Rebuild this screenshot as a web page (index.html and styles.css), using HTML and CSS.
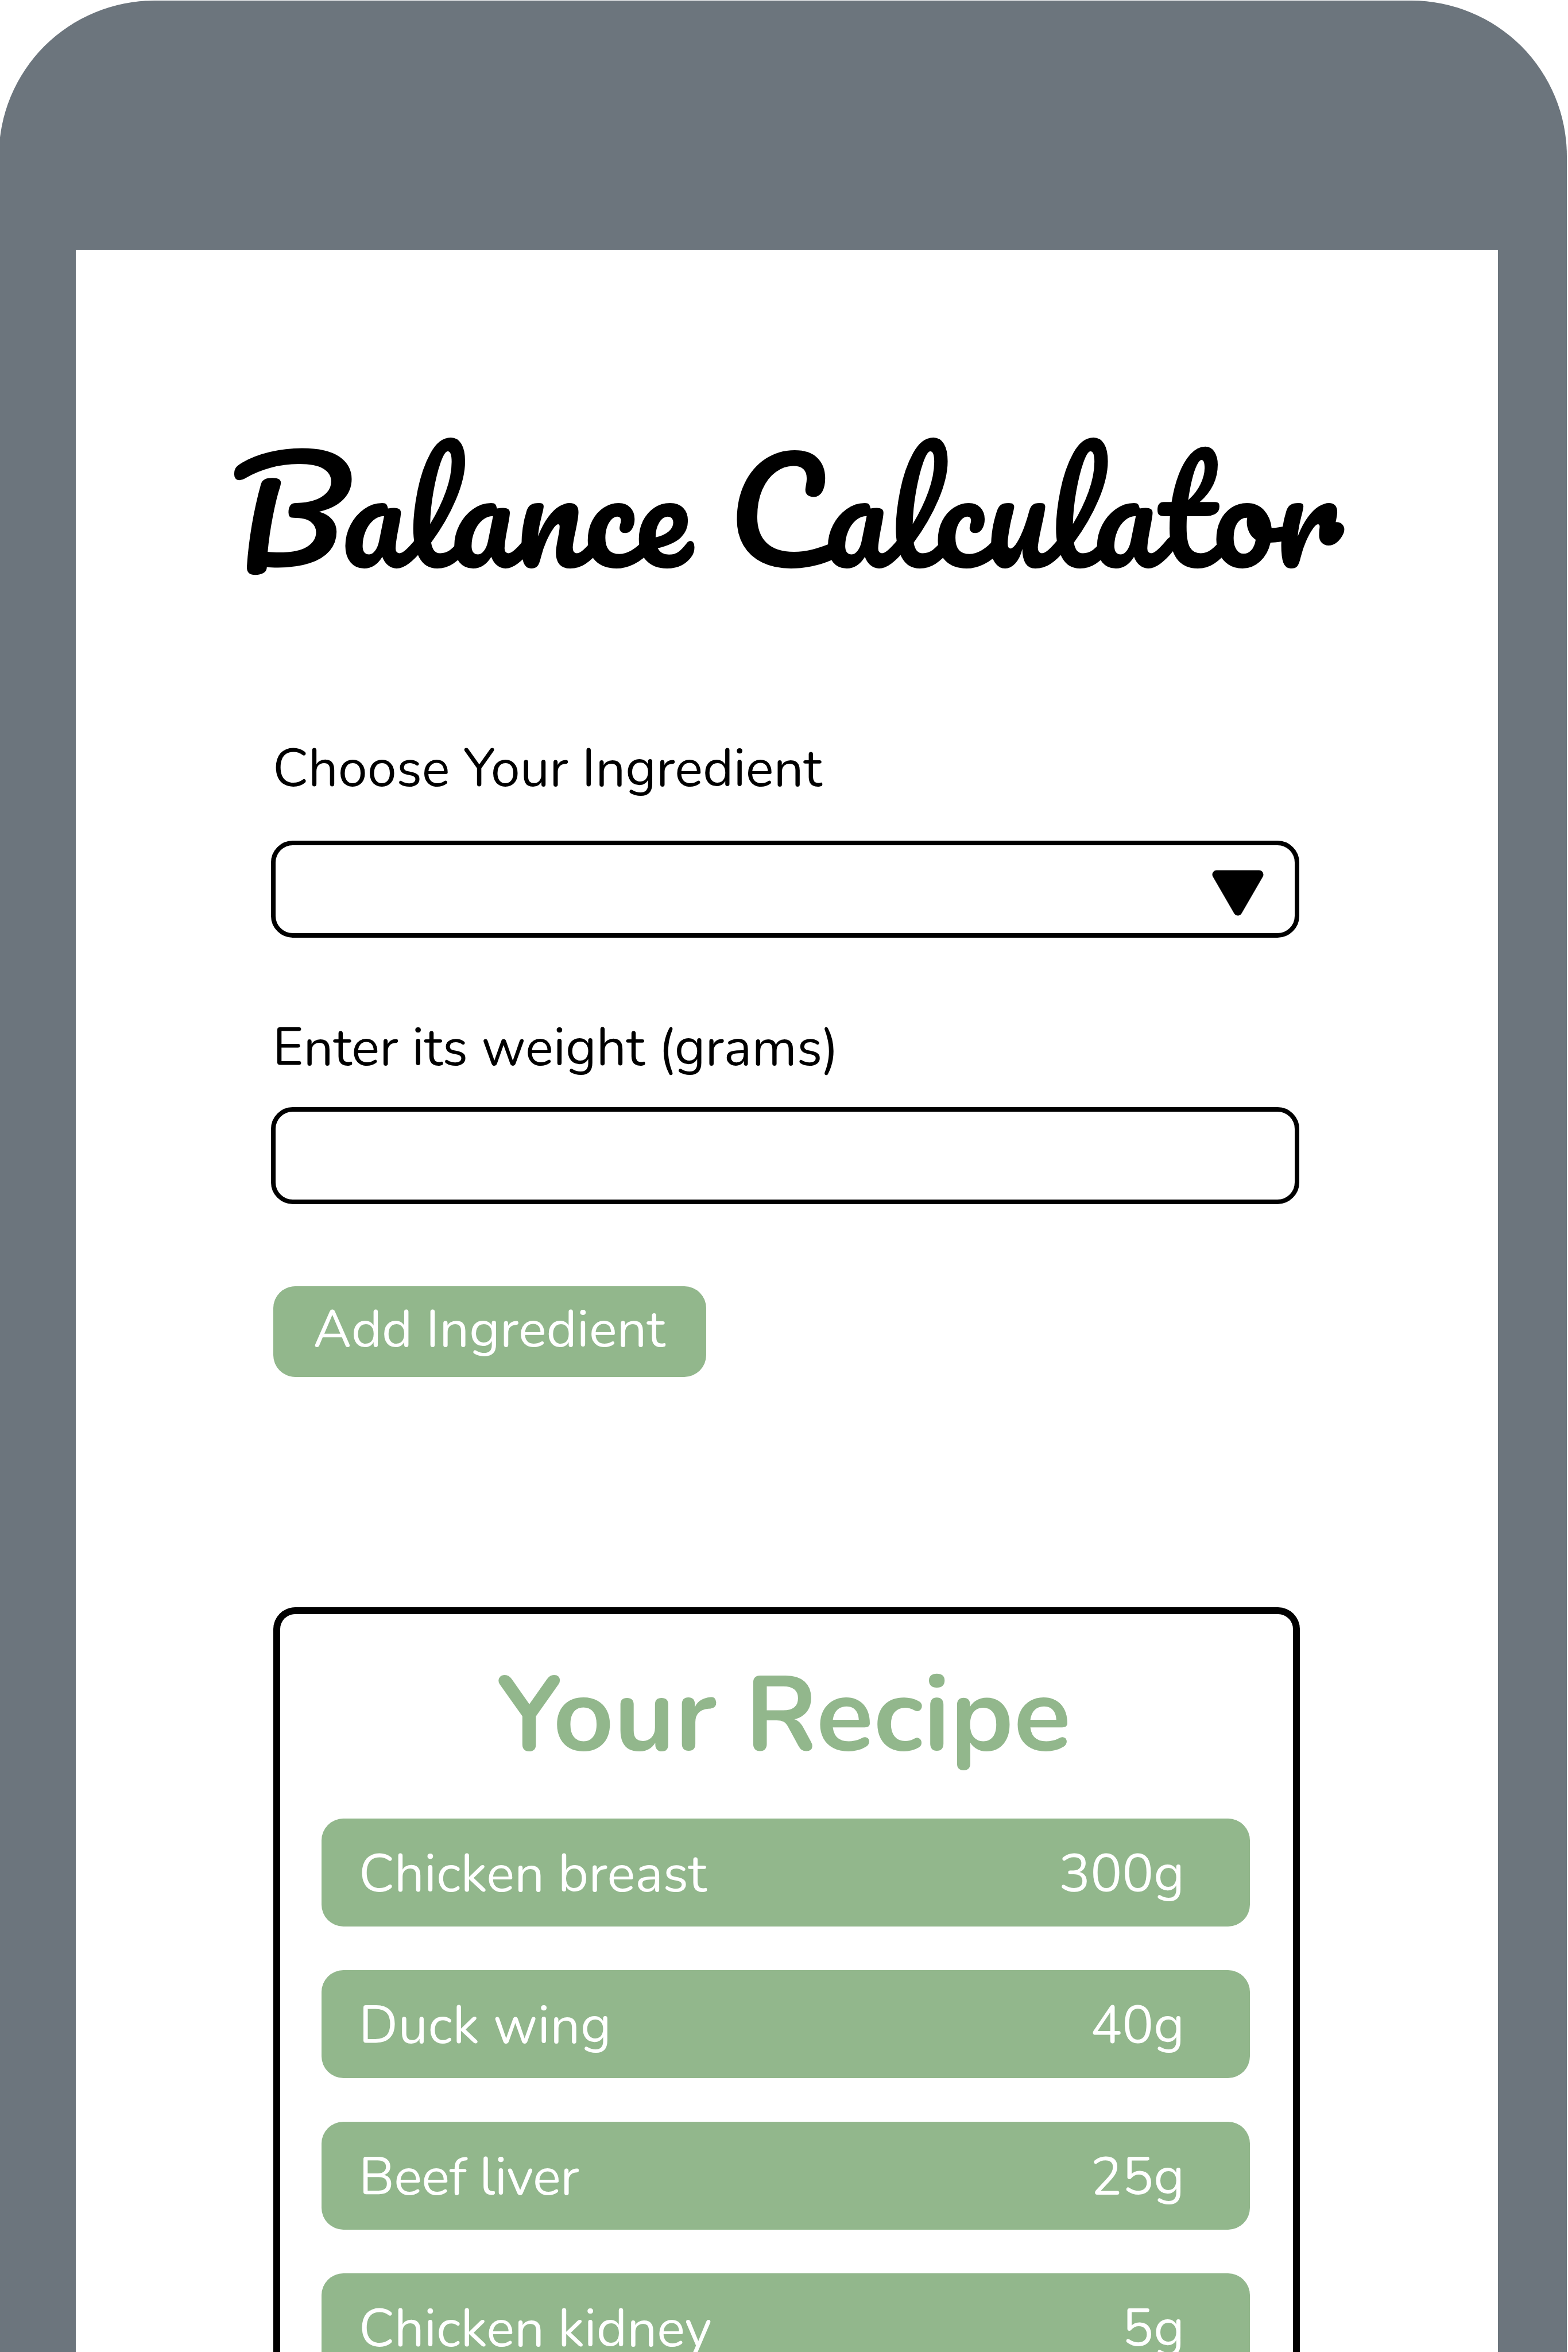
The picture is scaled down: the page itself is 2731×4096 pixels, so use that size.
FILE: index.html
```html
<!DOCTYPE html>
<html lang="en">
<head>
<meta charset="utf-8">
<title>Balance Calculator</title>
<link rel="stylesheet" href="styles.css">
</head>
<body>
<div class="device">
  <main class="screen">
    <h1 class="title">Balance Calculator</h1>
    <form class="form">
      <label class="label">Choose Your Ingredient</label>
      <div class="field field-select">
        <svg class="caret" viewBox="0 0 90 80" aria-hidden="true"><path d="M8 8H82L45 72Z" fill="#000" stroke="#000" stroke-width="15" stroke-linejoin="round"/></svg>
      </div>
      <label class="label label-weight">Enter its weight (grams)</label>
      <div class="field"></div>
      <button class="add" type="button">Add Ingredient</button>
    </form>
    <section class="recipe">
      <h2 class="recipe-title">Your Recipe</h2>
      <ul class="list">
        <li class="row"><span>Chicken breast</span><span>300g</span></li>
        <li class="row"><span class="loose">Duck wing</span><span>40g</span></li>
        <li class="row"><span class="tight">Beef liver</span><span>25g</span></li>
        <li class="row"><span>Chicken kidney</span><span>5g</span></li>
      </ul>
    </section>
  </main>
</div>
</body>
</html>
```
FILE: styles.css
```css
* {
  box-sizing: border-box;
}

html {
  background: #fff;
}

body {
  margin: 0;
  width: 2731px;
  height: 4096px;
  overflow: hidden;
  color: #000;
  font-family: Nunito, Lato, sans-serif;
  font-size: 91.7px;
  line-height: 120px;
}

.device {
  width: 2731px;
  height: 4095px;
  margin: 1px 0 0 -2px;
  padding: 434px 120px 0 134px;
  border-radius: 271px 271px 0 0;
  background: #6c757d;
}

.screen {
  display: flex;
  flex-direction: column;
  height: 3661px;
  padding: 301px 345px 0 340px;
  background: #fff;
}

.title {
  height: 300px;
  margin: 0 -303px 0 -297px;
  font-family: Pacifico, cursive;
  font-size: 241.4px;
  font-weight: 400;
  line-height: 300px;
  text-align: center;
  white-space: nowrap;
}

.form {
  display: flex;
  flex-direction: column;
  align-items: flex-start;
  padding-top: 243px;
}

.label {
  padding-left: 3px;
}

.label-weight {
  margin: 132px 0 43px;
}

.field {
  width: 1791px;
  height: 169px;
  border: 8px solid #000;
  border-radius: 38px;
}

.field-select {
  display: flex;
  justify-content: flex-end;
  margin-top: 65px;
  padding: 43px 54px 0 0;
}

.caret {
  width: 90px;
  height: 80px;
}

.add {
  width: 754px;
  height: 158px;
  margin: 143px 0 0 4px;
  padding: 0 2px 9px 0;
  border: 0;
  border-radius: 38px;
  background: #92b78c;
  color: #fff;
  font: inherit;
  font-size: 91.4px;
}

.recipe {
  flex: 1;
  margin: 401px 0 0 4px;
  padding: 67px 75px 0 72px;
  border: 12px solid #000;
  border-bottom: 0;
  border-radius: 38px 38px 0 0;
}

.recipe-title {
  margin: 0 7px 0 0;
  color: #92b78c;
  font-size: 184px;
  font-weight: 700;
  line-height: 220px;
  text-align: center;
}

.list {
  display: flex;
  flex-direction: column;
  gap: 76px;
  margin: 69px 0 0;
  padding: 0;
  list-style: none;
}

.row {
  display: flex;
  flex: none;
  align-items: center;
  justify-content: space-between;
  height: 188px;
  padding: 6px 114px 0 65px;
  border-radius: 38px;
  background: #92b78c;
  color: #fff;
}

.loose {
  letter-spacing: 0.5px;
}

.tight {
  letter-spacing: -0.7px;
}
```
